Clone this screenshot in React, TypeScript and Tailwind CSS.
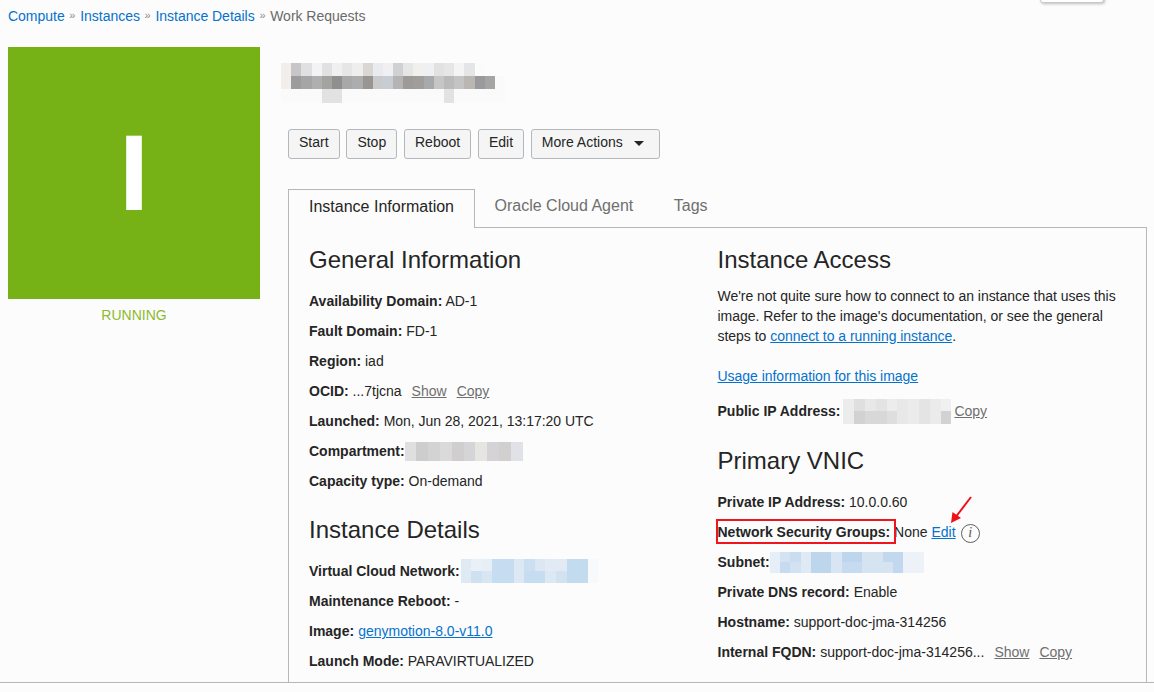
const font = { fontFamily: '"Liberation Sans", Arial, sans-serif' };

const titleRows = [
  ["#f2eeec", "#c6c6c8", "#e0e0e2", "#f3f3f3", "#e2e1e1", "#f0f0f0", "#e6e6e6", "#eeeeee", "#d8d7d4", "#e9ebef", "#f0f0f2", "#d0d1d3", "#e6e6e6", "#f1f0ee", "#eff0f1", "#e2e2e2", "#e6e6e6", "#f4f4f4", "#e4e5e7", "#fbfbfb", "#fcfcfc", "#fcfcfc"],
  ["#f2eeec", "#9c9c9c", "#a5a5a5", "#aeb0b0", "#a5a3a0", "#8f8f8f", "#a8a8a8", "#adadad", "#999593", "#c8cacb", "#c8cdd3", "#b4b4b4", "#9e9a98", "#a09e9b", "#a6aaac", "#c6c6c6", "#bababa", "#c4c4c4", "#bab6b2", "#9a9a9e", "#a5a5a5", "#fafafa"],
  ["#fafafa", "#fafafa", "#fafafa", "#fafafa", "#e2e2e2", "#e2e2e2", "#fafafa", "#fafafa", "#fafafa", "#fafafa", "#fafafa", "#fafafa", "#fafafa", "#fafafa", "#fafafa", "#fafafa", "#e2e2e2", "#fafafa", "#fafafa", "#fafafa", "#fafafa", "#fafafa"],
];

const compartment = [
  ["#dfdfdf", "#cdcdcd", "#d3d3d3", "#dadada", "#d0cece", "#d5d5d8", "#e6e5e2", "#d4d4d6", "#d2d0ce", "#e1e2e7"],
];
const vcn = [
  ["#e0eaf4", "#e9f0f7", "#e6eef6", "#c6dcf0", "#c6dcf0", "#dce8f4", "#cbdff1", "#dbe7f3", "#e2ebf5", "#e2ebf5", "#c3dbef", "#c3dbef", "#f7f9fb"],
  ["#e0eaf4", "#cfe0f0", "#d8e5f2", "#c6dcf0", "#c6dcf0", "#dce8f4", "#c6dcf0", "#c6dcf0", "#dce8f4", "#d3e2f1", "#c3dbef", "#c3dbef", "#f7f9fb"],
];
const subnet = [
  ["#e6eef7", "#d4e3f3", "#c9dcf0", "#e0eaf5", "#bdd6ec", "#bdd6ec", "#d8e5f3", "#bdd6ec", "#bdd6ec", "#d6e4f2", "#d6e4f2", "#c2d8ee", "#c2d8ee", "#ecf2f8", "#ecf2f8"],
  ["#e6eef7", "#c6dbef", "#d2e2f2", "#e0eaf5", "#bdd6ec", "#bdd6ec", "#d8e5f3", "#c6dbef", "#c6dbef", "#d6e4f2", "#d6e4f2", "#d6e4f2", "#c2d8ee", "#ecf2f8", "#ecf2f8"],
];
const publicIp = [
  ["#ececec", "#dfdfdf", "#e8e8e8", "#e3e3e3", "#ececec", "#e8e8e8", "#ebebeb", "#e4e4e4", "#ebebeb", "#f0f0f0"],
  ["#ececec", "#d2d2d2", "#d8d8d8", "#d8d8d8", "#dedede", "#e8e8e8", "#ebebeb", "#e4e4e4", "#ebebeb", "#d2d2d2"],
];

// blurred-out values in the screenshot
const Mosaic = ({ rows, cell, h, className = "" }: { rows: string[][]; cell: number; h: number; className?: string }) => (
  <span className={`inline-flex flex-col shrink-0 ${className}`}>
    {rows.map((row, i) => (
      <span key={i} className="flex">
        {row.map((c, j) => (
          <span key={j} style={{ width: cell, height: h, background: c }} />
        ))}
      </span>
    ))}
  </span>
);

const Row = ({ label, children }: { label: string; children?: React.ReactNode }) => (
  <div className="flex items-center h-[30px] whitespace-pre">
    <b className="font-bold">{label}</b>
    {children}
  </div>
);

const Ghost = ({ children, className = "" }: { children: React.ReactNode; className?: string }) => (
  <a className={`text-[#6f6f6f] underline ${className}`}>{children}</a>
);

const Link = ({ children, className = "" }: { children: React.ReactNode; className?: string }) => (
  <a className={`text-[#0572ce] underline ${className}`}>{children}</a>
);

const Btn = ({ children }: { children: React.ReactNode }) => (
  <button className="h-[30px] px-[10px] flex items-center border border-[#b4b8bb] rounded-[3px] bg-[#f5f5f5] text-[#252525] text-sm pb-[4px]">
    {children}
  </button>
);

export default function App() {
  return (
    <div style={font} className="relative h-[692px] w-[1154px] overflow-hidden flex flex-col bg-[#fcfcfc] text-sm text-[#252525]">
      <div className="absolute left-[1040px] top-[-10px] w-[64px] h-[13px] bg-white border border-[#c9c9c9] rounded-b-[3px] shadow-[1px_1px_3px_rgba(0,0,0,0.25)]" />

      <div className="h-[32px] px-2 flex items-center gap-[4.7px] tracking-[-0.02px]">
        <span className="text-[#0572ce]">Compute</span>
        <span className="text-[#8a8a8a] text-[11px]">»</span>
        <span className="text-[#0572ce]">Instances</span>
        <span className="text-[#8a8a8a] text-[11px]">»</span>
        <span className="text-[#0572ce]">Instance Details</span>
        <span className="text-[#8a8a8a] text-[11px]">»</span>
        <span className="text-[#6b6b6b]">Work Requests</span>
      </div>

      <div className="flex-1 min-h-0 flex pl-2 pt-[15px] pr-[7px]">
        <div className="w-[252px] shrink-0">
          <div className="h-[252px] bg-[#76b216] flex items-center justify-center text-white font-bold text-[108px] leading-none">
            I
          </div>
          <div className="mt-[6px] text-center text-[#8db92e]">RUNNING</div>
        </div>

        <div className="ml-[28px] flex-1 min-w-0 flex flex-col">
          <div className="pt-[14px] -ml-[7px] h-[82px]">
            <Mosaic rows={titleRows} cell={10.2} h={13.3} />
          </div>

          <div className="flex gap-[6.8px]">
            <Btn>Start</Btn>
            <Btn>Stop</Btn>
            <Btn>Reboot</Btn>
            <Btn>Edit</Btn>
            <Btn>
              More Actions
              <span className="ml-[11px] mr-[5px] mt-[3px] w-0 h-0 border-x-[5px] border-x-transparent border-t-[5px] border-t-[#252525]" />
            </Btn>
          </div>

          <div className="mt-[30px] flex h-[39px] text-base relative z-10">
            <div className="w-[187px] h-[39px] pb-[4px] border border-b-0 border-[#b4b8bb] bg-[#fcfcfc] flex items-center justify-center text-[#252525]">
              Instance Information
            </div>
            <div className="ml-[19.5px] h-[34px] flex items-center text-[#6f6f6f]">Oracle Cloud Agent</div>
            <div className="ml-[40.5px] h-[34px] flex items-center text-[#6f6f6f]">Tags</div>
          </div>

          <div className="-mt-px flex-1 min-h-0 border border-b-0 border-[#b4b8bb] pl-[20px] pt-[17px] grid grid-cols-[408.5px_1fr]">
            <div>
              <h2 className="text-2xl leading-[30px] mb-[11px]">General Information</h2>
              <Row label="Availability Domain:"> AD-1</Row>
              <Row label="Fault Domain:"> FD-1</Row>
              <Row label="Region:"> iad</Row>
              <Row label="OCID:">
                {" ...7tjcna"}
                <Ghost className="ml-[10px]">Show</Ghost>
                <Ghost className="ml-[10px]">Copy</Ghost>
              </Row>
              <Row label="Launched:">
                <span className="tracking-[-0.03px]"> Mon, Jun 28, 2021, 13:17:20 UTC</span>
              </Row>
              <Row label="Compartment:">
                <Mosaic rows={compartment} cell={11.8} h={19} />
              </Row>
              <Row label="Capacity type:"> On-demand</Row>

              <h2 className="text-2xl leading-[30px] mt-[19px] mb-[11px]">Instance Details</h2>
              <Row label="Virtual Cloud Network:">
                <span className="w-px" />
                <Mosaic rows={vcn} cell={10.6} h={12} />
              </Row>
              <Row label="Maintenance Reboot:"> -</Row>
              <Row label="Image:">
                <Link className="ml-[4px]">genymotion-8.0-v11.0</Link>
              </Row>
              <Row label="Launch Mode:">
                <span className="tracking-[-0.05px]"> PARAVIRTUALIZED</span>
              </Row>
            </div>

            <div className="pr-[20px]">
              <h2 className="text-2xl leading-[30px] mb-[11px]">Instance Access</h2>
              <p className="leading-5 tracking-[-0.03px]">
                We're not quite sure how to connect to an instance that uses this image. Refer to the image's
                documentation, or see the general steps to <Link>connect to a running instance</Link>.
              </p>
              <p className="leading-5 mt-5 tracking-[-0.03px]">
                <Link>Usage information for this image</Link>
              </p>
              <div className="mt-[10px]">
                <Row label="Public IP Address:">
                  <span className="w-[3px]" />
                  <Mosaic rows={publicIp} cell={10.8} h={12.5} />
                  <Ghost className="ml-[3px]">Copy</Ghost>
                </Row>
              </div>

              <h2 className="text-2xl leading-[30px] mt-[20px] mb-[11px]">Primary VNIC</h2>
              <Row label="Private IP Address:"> 10.0.0.60</Row>
              <div className="relative">
                <Row label="Network Security Groups:">
                  {" None "}
                  <Link>Edit</Link>
                  <span className="ml-[5px] mt-[2px] w-[19px] h-[19px] rounded-full border border-[#5f5f5f] flex items-center justify-center text-[#555] text-[14px] italic [font-family:'Liberation_Serif',serif]">
                    i
                  </span>
                </Row>
                <div className="absolute left-[-2px] top-[2px] w-[180px] h-[25px] border-2 border-[#f0141c]" />
                <svg className="absolute left-[228px] top-[-21px]" width="30" height="32" viewBox="0 0 30 32">
                  <path d="M25 1 L9 22" stroke="#f01018" strokeWidth="2" fill="none" />
                  <path d="M5 27 L6.5 16 L15 22 Z" fill="#f01018" />
                </svg>
              </div>
              <Row label="Subnet:">
                <Mosaic rows={subnet} cell={10.3} h={10.5} />
              </Row>
              <Row label="Private DNS record:"> Enable</Row>
              <Row label="Hostname:"> support-doc-jma-314256</Row>
              <Row label="Internal FQDN:">
                {" support-doc-jma-314256..."}
                <Ghost className="ml-[10px]">Show</Ghost>
                <Ghost className="ml-[10px]">Copy</Ghost>
              </Row>
            </div>
          </div>
        </div>
      </div>

      <div className="h-[10px] shrink-0 border-t border-[#b4b8bb]" />
    </div>
  );
}
